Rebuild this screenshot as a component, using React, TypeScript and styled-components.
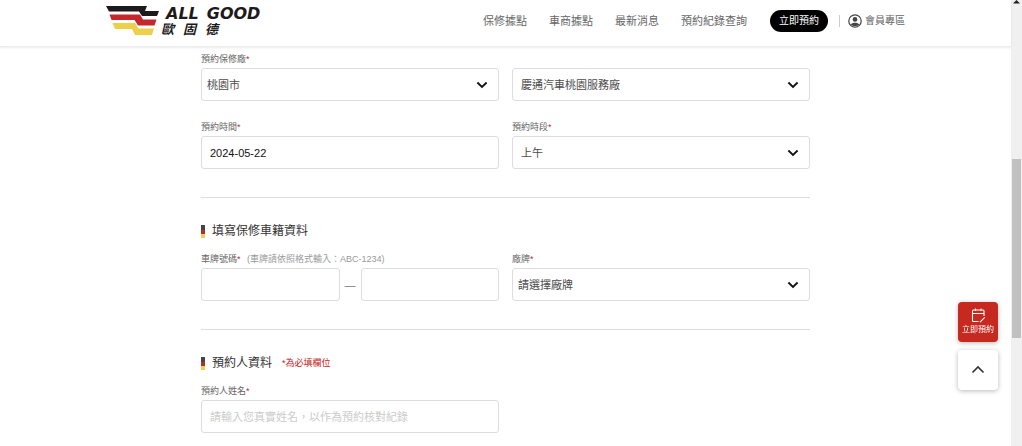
import React from "react";
import styled, { createGlobalStyle } from "styled-components";

const GlobalStyle = createGlobalStyle`
  *, *::before, *::after { box-sizing: border-box; }
  body {
    margin: 0;
    background: #fff;
    color: #555;
    font-family: "Liberation Sans", "Noto Sans CJK TC", sans-serif;
    font-size: 11px;
  }
  button, input, select { font-family: inherit; }
  a { color: inherit; text-decoration: none; }
`;

const Shell = styled.div`
  display: flex;
  align-items: flex-start;
`;

const Page = styled.div`
  flex: 1;
  min-width: 0;
`;

const Header = styled.header`
  position: sticky;
  top: 0;
  z-index: 2;
  background: #fff;
  border-bottom: 1px solid #ececec;
  box-shadow: 0 1px 2px rgba(0, 0, 0, 0.08);
`;

const HeaderInner = styled.div`
  display: flex;
  align-items: center;
  justify-content: space-between;
  max-width: 799px;
  min-height: 46px;
  margin: 0 auto;
  padding-bottom: 4px;
`;

const Brand = styled.a`
  display: flex;
  align-items: center;
  gap: 1px;
  color: #1d1a1b;
`;

const Flag = styled.svg`
  width: 54px;
  height: 32px;
`;

const BrandText = styled.span`
  display: flex;
  flex-direction: column;
`;

const Wordmark = styled.span`
  display: flex;
  gap: 8px;
  padding-left: 5px;
  font: italic 700 16px/18px "DejaVu Sans", sans-serif;
`;

const BrandName = styled.span`
  display: flex;
  gap: 9px;
  font: italic 700 13px/14px "Liberation Sans", "Noto Sans CJK TC", sans-serif;
`;

const Nav = styled.nav`
  display: flex;
  align-items: center;
  gap: 22px;
  line-height: 18px;
  color: #666;
`;

const NavActions = styled.div`
  display: flex;
  align-items: center;
  gap: 8px;
  margin-left: 1px;
  font-size: 10px;
`;

const BookButton = styled.button`
  height: 22px;
  padding: 0 9px;
  border: 0;
  border-radius: 11px;
  background: #000;
  color: #fff;
  font-size: 10px;
  line-height: 20px;
`;

const Member = styled.a`
  display: flex;
  align-items: center;
  gap: 3px;
  margin-left: 3px;
  padding-left: 9px;
  background: linear-gradient(#ccc, #ccc) left center / 1px 12px no-repeat;
`;

const Form = styled.form`
  max-width: 609px;
  margin: 0 auto;
  padding: 4px 0 12px;
`;

const Section = styled.section`
  & + & {
    margin-top: 28px;
    padding-top: 23px;
    border-top: 1px solid #ddd;
  }
`;

const Heading = styled.h2`
  display: flex;
  align-items: center;
  gap: 7px;
  margin: 0 0 10px;
  color: #333;
  font-size: 12px;
  font-weight: 400;
  line-height: 20px;

  &::before {
    content: "";
    width: 4px;
    height: 13px;
    background: linear-gradient(#4a4245 38%, #a8352c 38% 70%, #f0cd55 70%);
  }
`;

const Notice = styled.small`
  margin-left: 3px;
  color: #c4201c;
  font-size: 9px;
`;

const Grid = styled.div`
  display: grid;
  grid-template-columns: 1fr 1fr;
  gap: 18px 13px;
  align-items: end;
`;

const Field = styled.div`
  min-width: 0;
`;

const Label = styled.label`
  display: block;
  color: #666;
  font-size: 9px;
  line-height: 17px;
`;

const Star = styled.span`
  color: #b8323a;
`;

const Hint = styled.span`
  margin-left: 4px;
  color: #999;
`;

const Input = styled.input`
  display: block;
  width: 100%;
  min-width: 0;
  height: 33px;
  padding: 0 8px;
  border: 1px solid #ddd;
  border-radius: 3px;
  background: #fff;
  color: #111;
  font-size: 11px;

  &::placeholder { color: #ccc; opacity: 1; }
`;

const SelectBox = styled.div`
  display: grid;
  align-items: center;

  & > * { grid-area: 1 / 1; }

  & > svg {
    justify-self: end;
    margin-right: 11px;
    pointer-events: none;
  }
`;

const Select = styled.select<{ $inset: number }>`
  appearance: none;
  width: 100%;
  height: 33px;
  padding: 0 30px 0 ${(p) => p.$inset}px;
  border: 1px solid #ddd;
  border-radius: 3px;
  background: #fff;
  color: #4c4c4c;
  font-size: 11px;
`;

const Plate = styled.div`
  display: flex;
  align-items: center;
  gap: 5px;
  color: #777;
`;

const Floating = styled.div`
  position: fixed;
  right: 24px;
  bottom: 56px;
  z-index: 3;
  display: grid;
  gap: 8px;
`;

const FloatButton = styled.button<{ $accent?: boolean }>`
  display: flex;
  flex-direction: column;
  align-items: center;
  justify-content: center;
  gap: 1px;
  width: 40px;
  height: 40px;
  padding: 0 0 2px;
  border: 0;
  border-radius: 4px;
  background: ${(p) => (p.$accent ? "#c5291f" : "#fff")};
  color: ${(p) => (p.$accent ? "#fff" : "#333")};
  box-shadow: 0 1px 5px rgba(0, 0, 0, 0.28);
  font-size: 8px;
  line-height: 11px;
`;

const Track = styled.div`
  position: sticky;
  top: 0;
  display: grid;
  grid-template-rows: 357fr 400fr 243fr;
  justify-items: center;
  width: 11px;
  height: 100vh;
  background: #f0f0f0;
`;

const Thumb = styled.div`
  width: 9px;
  background: #c1c1c1;
`;

const Chevron = () => (
  <svg width="12" height="8" viewBox="0 0 12 8" fill="none" stroke="#111" strokeWidth="1.8" aria-hidden="true">
    <path d="M1.4 1.5 6 6l4.6-4.5" />
  </svg>
);

type SelectFieldProps = { id: string; label?: string; name: string; value: string; inset?: number };

const SelectField = ({ id, label, name, value, inset = 8 }: SelectFieldProps) => (
  <Field>
    {label && <Label htmlFor={id}>{label}<Star>*</Star></Label>}
    <SelectBox>
      <Select id={id} aria-label={name} $inset={inset} defaultValue={value}>
        <option>{value}</option>
      </Select>
      <Chevron />
    </SelectBox>
  </Field>
);

const links = ["保修據點", "車商據點", "最新消息", "預約紀錄查詢"];

export default function App() {
  return (
    <>
      <GlobalStyle />
      <Shell>
        <Page>
          <Header>
            <HeaderInner>
              <Brand href="#">
                <Flag viewBox="0 0 54 32" aria-hidden="true">
                  <path fill="#1d1a1b" d="M0 1h41l-2 5h14l-2 5H36l-3-4.500H3z" />
                  <path fill="#c4282c" d="M3.500 9.500H34l3 5h13.500l-2 6H32l-3.500-5.500h-23z" />
                  <path fill="#ecd04a" d="M6.500 18H29l3.500 5.500H48L46 30H29l-3-6H9z" />
                </Flag>
                <BrandText>
                  <Wordmark><span>ALL</span><span>GOOD</span></Wordmark>
                  <BrandName><span>歐</span><span>固</span><span>德</span></BrandName>
                </BrandText>
              </Brand>
              <Nav>
                {links.map((text) => <a key={text} href="#">{text}</a>)}
                <NavActions>
                  <BookButton type="button">立即預約</BookButton>
                  <Member href="#">
                    <svg width="14" height="14" viewBox="0 0 14 14" aria-hidden="true">
                      <circle cx="7" cy="7" r="6.2" fill="none" stroke="#444" strokeWidth="1.2" />
                      <circle cx="7" cy="5.4" r="2.3" fill="#444" />
                      <path d="M2.8 10.6C4 8.2 10 8.2 11.2 10.6 9 12.6 5 12.6 2.8 10.6z" fill="#444" />
                    </svg>
                    會員專區
                  </Member>
                </NavActions>
              </Nav>
            </HeaderInner>
          </Header>
          <Form>
            <Section>
              <Grid>
                <SelectField id="city" label="預約保修廠" name="預約保修廠" value="桃園市" inset={5} />
                <SelectField id="shop" name="服務廠" value="慶通汽車桃園服務廠" />
                <Field>
                  <Label htmlFor="date">預約時間<Star>*</Star></Label>
                  <Input id="date" defaultValue="2024-05-22" />
                </Field>
                <SelectField id="slot" label="預約時段" name="預約時段" value="上午" />
              </Grid>
            </Section>
            <Section>
              <Heading>填寫保修車籍資料</Heading>
              <Grid>
                <Field>
                  <Label htmlFor="plate">
                    車牌號碼<Star>*</Star> <Hint>(車牌請依照格式輸入：ABC-1234)</Hint>
                  </Label>
                  <Plate>
                    <Input id="plate" />
                    <span>—</span>
                    <Input aria-label="車牌號碼後段" />
                  </Plate>
                </Field>
                <SelectField id="brand" label="廠牌" name="廠牌" value="請選擇廠牌" inset={5} />
              </Grid>
            </Section>
            <Section>
              <Heading>預約人資料 <Notice>*為必填欄位</Notice></Heading>
              <Grid>
                <Field>
                  <Label htmlFor="name">預約人姓名<Star>*</Star></Label>
                  <Input id="name" placeholder="請輸入您真實姓名，以作為預約核對紀錄" />
                </Field>
              </Grid>
            </Section>
          </Form>
        </Page>
        <Track aria-hidden="true">
          <svg width="7" height="4" viewBox="0 0 7 4"><path d="M0 3.5 3.5 0 7 3.5z" fill="#222" /></svg>
          <Thumb />
        </Track>
      </Shell>
      <Floating>
        <FloatButton type="button" $accent>
          <svg width="15" height="15" viewBox="0 0 15 15" fill="none" stroke="#fff" strokeWidth="1.1" aria-hidden="true">
            <path d="M7.500 13.500H2.500Q1.500 13.500 1.500 12.500V3Q1.500 2 2.500 2h9.500Q13 2 13 3V8M1.500 5.500H13M4.500 .5V3M10 .5V3M9 14.200l4.800-4.800" />
          </svg>
          立即預約
        </FloatButton>
        <FloatButton type="button" aria-label="回到頂端">
          <svg width="14" height="9" viewBox="0 0 14 9" fill="none" stroke="#333" strokeWidth="1.6" aria-hidden="true">
            <path d="M1.500 7.500 7 2l5.500 5.500" />
          </svg>
        </FloatButton>
      </Floating>
    </>
  );
}
